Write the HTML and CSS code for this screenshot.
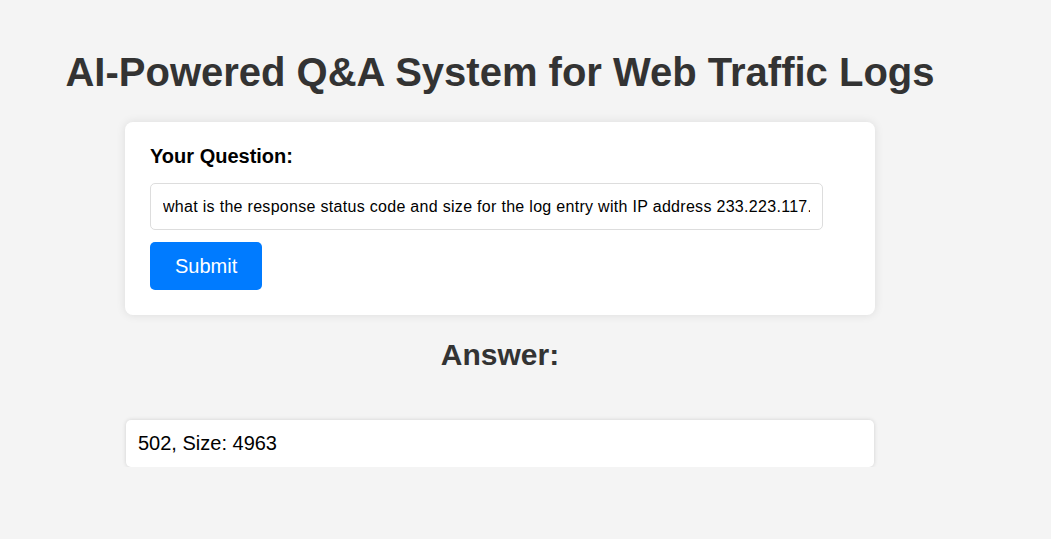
FILE: index.html
```html
<!DOCTYPE html>
<html lang="en">
<head>
<meta charset="utf-8">
<title>AI-Powered Q&amp;A System for Web Traffic Logs</title>
<link rel="stylesheet" href="styles.css">
</head>
<body>
<div class="page">
  <h1 class="title">AI-Powered Q&amp;A System for Web Traffic Logs</h1>
  <form class="card">
    <label class="label" for="q">Your Question:</label>
    <input class="input" id="q" type="text" value="what is the response status code and size for the log entry with IP address 233.223.117.31?">
    <button class="btn" type="button">Submit</button>
  </form>
  <h2 class="answer-title">Answer:</h2>
  <div class="answer">502, Size: 4963</div>
</div>
</body>
</html>
```
FILE: styles.css
```css
html, body {
  margin: 0;
  padding: 0;
  background: #f4f4f4;
}
body {
  font-family: "Liberation Sans", Arial, sans-serif;
  color: #333;
}
.page {
  width: 1000px;
  padding-top: 49px;
  display: flex;
  flex-direction: column;
  align-items: center;
}
.title {
  margin: 0;
  font-size: 40px;
  line-height: 46px;
  font-weight: bold;
  color: #333;
  white-space: nowrap;
}
.card {
  box-sizing: border-box;
  width: 750px;
  margin-top: 27px;
  background: #fff;
  border-radius: 8px;
  box-shadow: 0 0 10px rgba(0, 0, 0, 0.1);
  padding: 23px 25px 25px;
  display: flex;
  flex-direction: column;
  align-items: flex-start;
}
.label {
  font-size: 20px;
  line-height: 23px;
  font-weight: bold;
  color: #000;
}
.input {
  box-sizing: border-box;
  margin-top: 15px;
  width: 673px;
  height: 47px;
  padding: 0 12px;
  border: 1px solid #ddd;
  border-radius: 5px;
  font-family: "Liberation Sans", Arial, sans-serif;
  font-size: 16px;
  letter-spacing: 0.3px;
  color: #000;
  background: #fff;
  outline: none;
}
.btn {
  margin-top: 12px;
  height: 48px;
  padding: 0 25px;
  border: none;
  border-radius: 5px;
  background: #007bff;
  color: #fff;
  font-family: "Liberation Sans", Arial, sans-serif;
  font-size: 20px;
  line-height: 24px;
  cursor: pointer;
}
.answer-title {
  margin: 22px 0 0;
  font-size: 30px;
  line-height: 35px;
  font-weight: bold;
  color: #333;
}
.answer {
  box-sizing: border-box;
  width: 748px;
  margin-top: 48px;
  padding: 12px 12px;
  background: #fff;
  border-radius: 5px;
  box-shadow: 0 0 4px rgba(0, 0, 0, 0.15);
  font-size: 20px;
  line-height: 23px;
  color: #000;
}
```
